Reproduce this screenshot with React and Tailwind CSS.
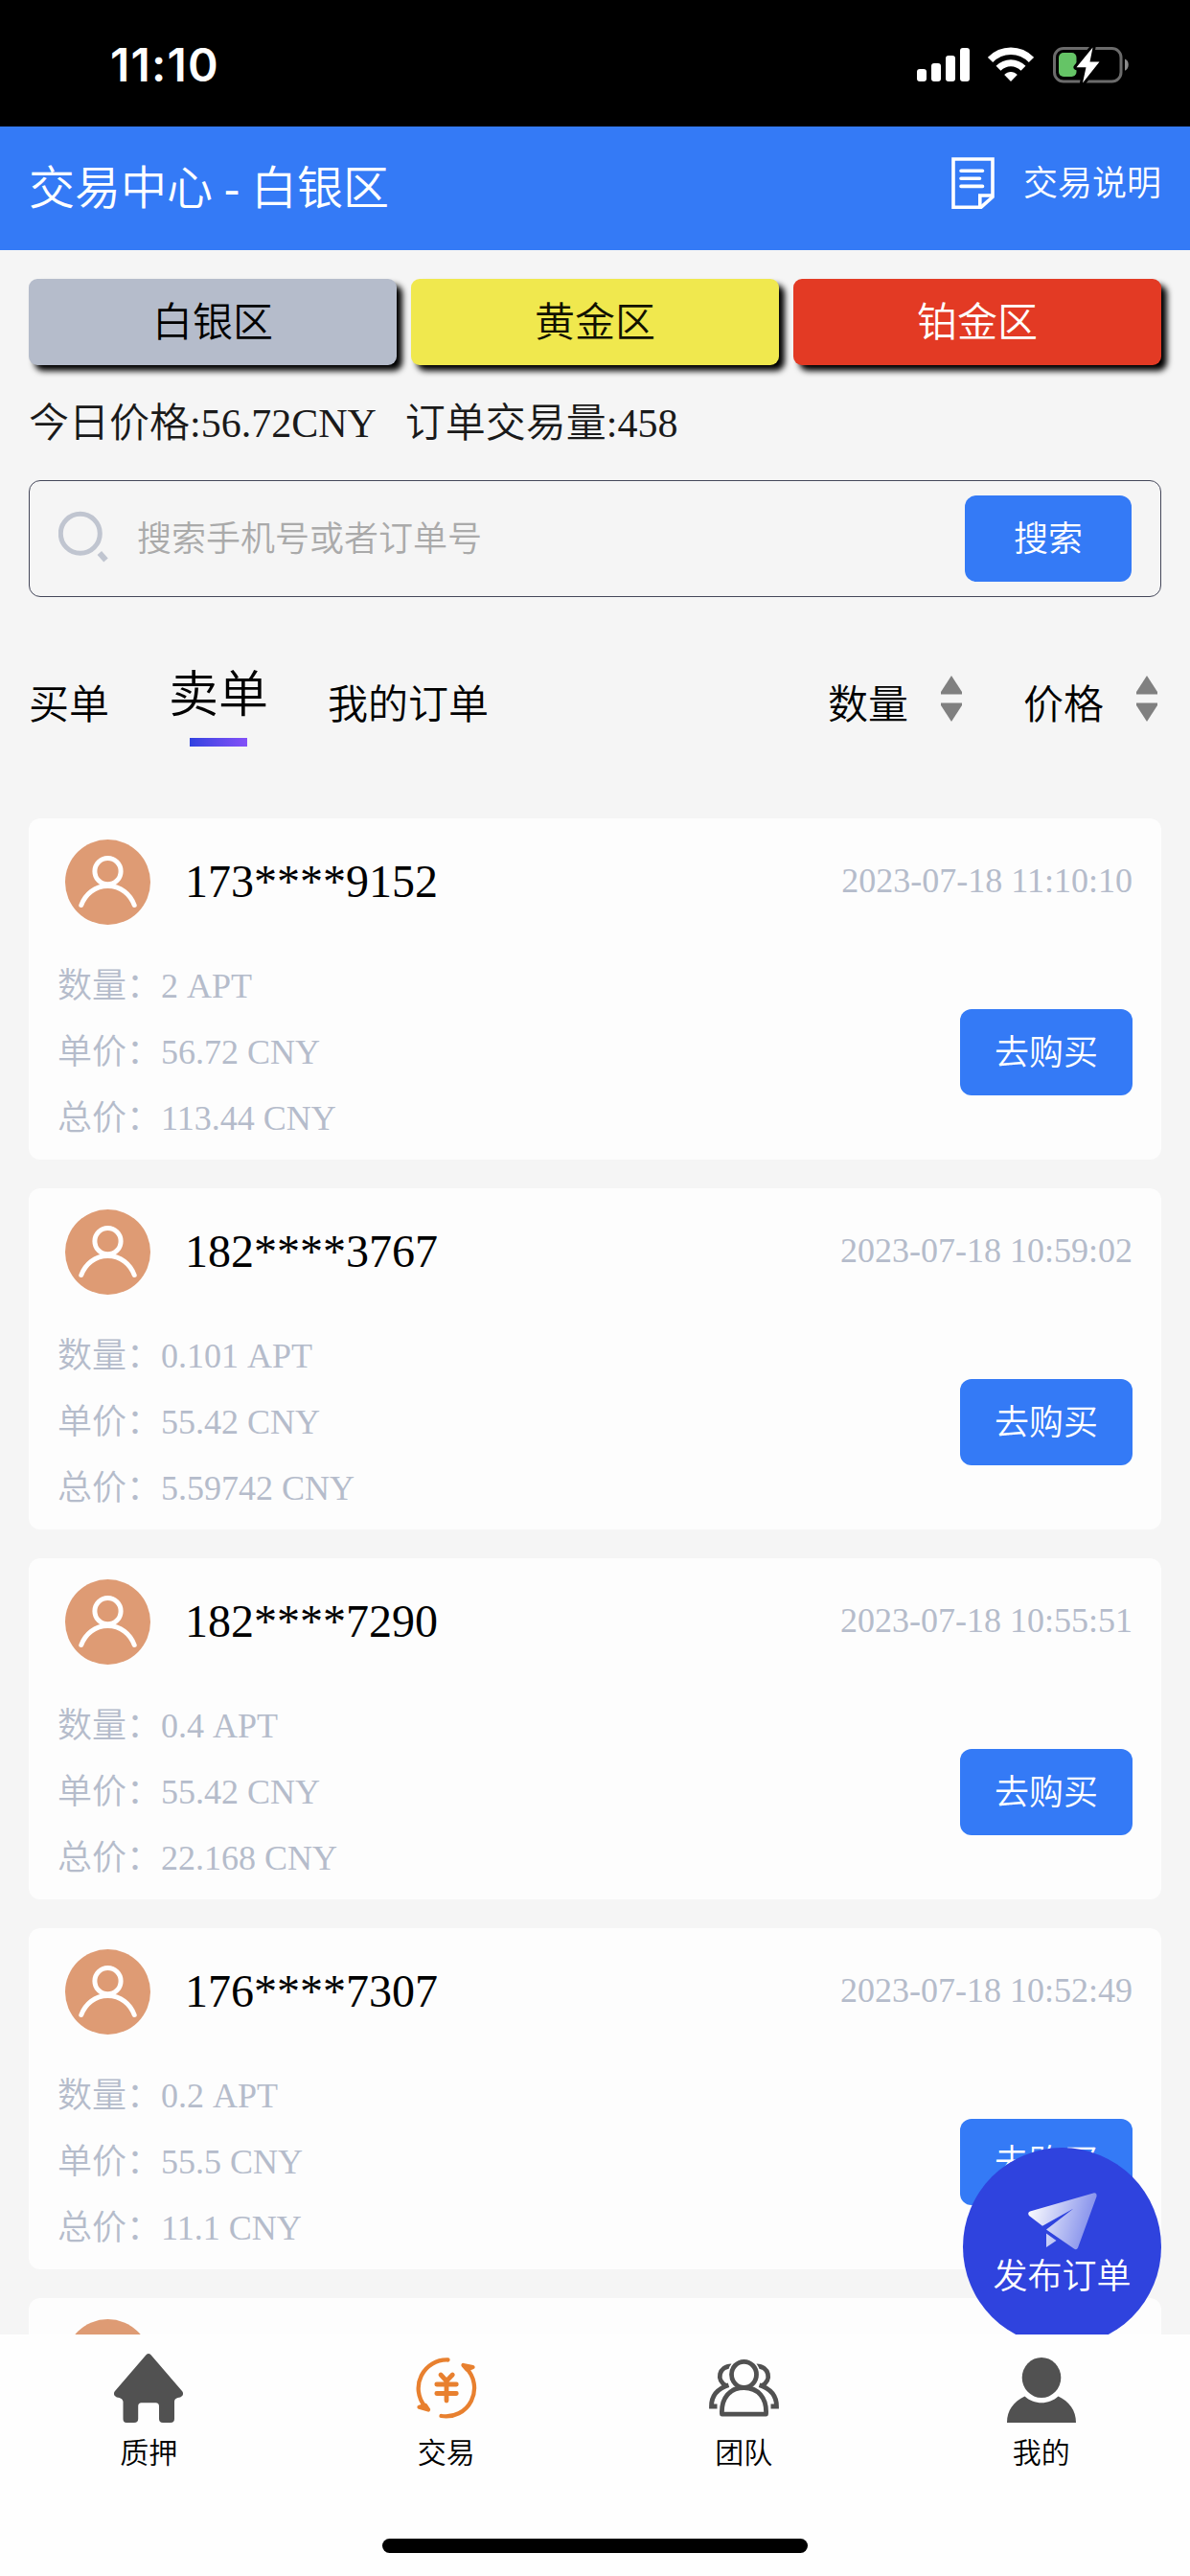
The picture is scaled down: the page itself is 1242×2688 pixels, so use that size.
import { useState } from "react";
import clsx from "clsx";

const zones = [
  { name: "白银区", style: "bg-[#b5bccb] text-black" },
  { name: "黄金区", style: "bg-[#f0e84e] text-[#111100]" },
  { name: "铂金区", style: "bg-[#e33a24] text-white" },
];

const orders = [
  { id: 1, phone: "173****9152", time: "2023-07-18 11:10:10", amount: "2", price: "56.72", total: "113.44" },
  { id: 2, phone: "182****3767", time: "2023-07-18 10:59:02", amount: "0.101", price: "55.42", total: "5.59742" },
  { id: 3, phone: "182****7290", time: "2023-07-18 10:55:51", amount: "0.4", price: "55.42", total: "22.168" },
  { id: 4, phone: "176****7307", time: "2023-07-18 10:52:49", amount: "0.2", price: "55.5", total: "11.1" },
  { id: 5 },
];

const StatusBar = () => (
  <div className="flex h-[132px] shrink-0 items-start justify-between bg-black pl-[115px] pr-[63px] pt-[49px] text-white">
    <span className="font-[Inter,sans-serif] text-[48px] font-semibold leading-[38px] tracking-[1.2px]">
      11:10
    </span>
    <div className="flex items-start">
      <svg width="55" height="38" viewBox="0 0 55 38" fill="#fff">
        <rect x="0" y="23" width="10" height="13" rx="3" />
        <rect x="15" y="17" width="10" height="19" rx="3" />
        <rect x="30" y="9" width="10" height="27" rx="3" />
        <rect x="45" y="1" width="10" height="35" rx="3" />
      </svg>
      <svg className="ml-[19px]" width="48" height="38" viewBox="0 0 48 38" fill="none" stroke="#fff">
        <path d="M2.5 13.5C14.5 1.2 33.5 1.2 45.5 13.5" strokeWidth="7.5" />
        <path d="M11 22.3C18.5 14.8 29.5 14.8 37 22.3" strokeWidth="7" />
        <path d="M17.2 29C21 25 27 25 30.8 29L24 36Z" fill="#fff" stroke="none" />
      </svg>
      <svg className="ml-[20px]" width="80" height="38" viewBox="0 0 80 38">
        <rect x="1.5" y="1.5" width="69.5" height="34.5" rx="9.5" fill="none" stroke="#6b6b6b" strokeWidth="3" />
        <rect x="6" y="6" width="18.5" height="25" rx="5" fill="#65c466" />
        <path d="M75 12.5C80 14 80 23 75 24.8Z" fill="#8a8a8a" />
        <path
          d="M41.5 0.5L24.5 21.2H34.5L31 37.5L48.5 15.5H38.5Z"
          fill="#fff"
          stroke="#000"
          strokeWidth="6"
          strokeLinejoin="round"
          paintOrder="stroke"
        />
      </svg>
    </div>
  </div>
);

const Header = () => (
  <header className="flex h-[129px] shrink-0 justify-between bg-[#347af6] px-[30px] text-white">
    <h1 className="text-[48px] font-[350] leading-[129px]">交易中心 - 白银区</h1>
    <div className="flex h-[118px] items-center">
      <svg width="45" height="54" viewBox="0 0 45 54" fill="none" stroke="#fff" strokeWidth="3.6">
        <path d="M2 2H43V41.5L31 52.2H2Z" />
        <path d="M43 40H29.8V52" />
        <path d="M10 14.2H32.5M10 22.3H29.5M10 30.4H32.5" strokeLinecap="round" />
      </svg>
      <span className="ml-[30px] pt-px text-[36px]">交易说明</span>
    </div>
  </header>
);

const SearchBox = () => {
  const [keyword, setKeyword] = useState("");

  return (
    <div className="flex h-[122px] items-center rounded-xl border border-[#44475a] px-[30px]">
      <svg className="-mt-1" width="53" height="54" viewBox="0 0 53 54" fill="none" stroke="#c0c5d0" strokeWidth="5">
        <circle cx="22.8" cy="23.8" r="20.5" />
        <path d="M42.8 44L49.5 51.5" strokeWidth="6" />
      </svg>
      <input
        value={keyword}
        onChange={(e) => setKeyword(e.target.value)}
        placeholder="搜索手机号或者订单号"
        className="ml-[29px] flex-1 bg-transparent pt-0.5 text-[36px] placeholder-[#aaaaaa] outline-none"
      />
      <button className="h-[90px] w-[174px] rounded-xl bg-[#347af6] pt-0.5 text-[36px] text-white">搜索</button>
    </div>
  );
};

const SortArrows = () => (
  <svg className="-mt-3.5 ml-[34px]" width="22" height="48" viewBox="0 0 22 48" fill="#808080">
    <path d="M11 0L22 17V19.5H0V17Z" />
    <path d="M11 48L22 31V28.5H0V31Z" />
  </svg>
);

const Tabs = () => {
  const [active, setActive] = useState("卖单");

  return (
    <div className="flex h-[231px] items-start justify-between pr-1 pt-[83px] text-[42px] leading-[60px] text-black">
      <div className="flex gap-[62px]">
        {["买单", "卖单", "我的订单"].map((tab) => (
          <button key={tab} onClick={() => setActive(tab)} className="flex flex-col items-center">
            <span className={clsx(active === tab && "-mt-[10px] text-[52px]")}>{tab}</span>
            {active === tab && (
              <span className="mt-3.5 h-[9px] w-[60px] bg-linear-to-r from-[#3042e0] to-[#8350f8]" />
            )}
          </button>
        ))}
      </div>
      <div className="flex gap-16">
        <div className="flex items-center">
          数量
          <SortArrows />
        </div>
        <div className="flex items-center">
          价格
          <SortArrows />
        </div>
      </div>
    </div>
  );
};

const OrderCard = ({ order }) => (
  <div className="h-[356px] shrink-0 rounded-xl bg-[#fdfdfd] px-[30px] pt-[22px]">
    <div className="flex h-[89px] items-center">
      <svg className="ml-2" width="89" height="89" viewBox="0 0 89 89" fill="none" stroke="#fff" strokeWidth="5">
        <circle cx="44.5" cy="44.5" r="44.5" fill="#de9b74" stroke="none" />
        <circle cx="44.5" cy="33.2" r="13.6" />
        <path d="M16.8 68.5C21 57 31 48.5 44.5 48.5S68 57 72.2 68.5" strokeLinecap="round" />
      </svg>
      <span className="ml-[36px] pb-px text-[48px] text-black">{order.phone}</span>
      <span className="ml-auto pb-[3px] text-[36px] text-[#b5bccb]">{order.time}</span>
    </div>
    {order.phone && (
      <div className="mt-[30px] flex items-center justify-between">
        <div className="text-[36px] leading-[69px] text-[#b5bccb]">
          <p>数量：{order.amount} APT</p>
          <p>单价：{order.price} CNY</p>
          <p>总价：{order.total} CNY</p>
        </div>
        <button className="-mt-px h-[90px] w-[180px] rounded-xl bg-[#347af6] pt-0.5 text-[36px] text-white">
          去购买
        </button>
      </div>
    )}
  </div>
);

const HomeIcon = () => (
  <svg width="72" height="72" viewBox="0 0 72 72" fill="#515151">
    <path d="M33.5 1.2Q36 -1.2 38.5 1.2L71 39Q73 41.5 71.2 44Q69.5 46 66.5 46Q63 47 63 50V68Q63 72 59 72H51Q47 72 47 68V55Q47 51.3 43.5 51.3H28.5Q25.2 51.3 25.2 55V68Q25.2 72 21 72H13Q9.5 72 9.5 68V50Q9 47 5.5 46Q2.5 46 0.8 44Q-1 41.5 1 39Z" />
  </svg>
);

const TradeIcon = () => (
  <svg
    width="64"
    height="72"
    viewBox="0 -4 64 72"
    fill="none"
    stroke="#e8802f"
    strokeWidth="4.3"
    strokeLinecap="round"
    strokeLinejoin="round"
  >
    <path d="M33.5 2.5A29.6 29.6 0 0 0 9.5 51" />
    <path d="M3.5 51.8L13 54.5L10 50Z" />
    <path d="M26.5 61A29.6 29.6 0 0 0 52 10.5" />
    <path d="M59.5 10L49.5 8L53.5 12.5Z" />
    <path d="M26 18L32 24.5L38.3 18M32 24.5V45M21.8 28H42.3M21.8 37.5H42.3" strokeWidth="4.8" />
  </svg>
);

const TeamIcon = () => (
  <svg width="73" height="72" viewBox="0 -6 73 72" fill="none" stroke="#515151" strokeWidth="4.8">
    <path d="M23.5 7C10 7 7 22 18 27.5" />
    <path d="M20.5 26.8C9 30.5 2.5 38 2.5 49H8.5" />
    <path d="M49.5 7C63 7 66 22 55 27.5" />
    <path d="M52.5 26.8C64 30.5 70.5 38 70.5 49H64.5" />
    <ellipse cx="36.5" cy="15.8" rx="13" ry="13.5" fill="#fff" stroke="#fff" strokeWidth="8" />
    <ellipse cx="36.5" cy="15.8" rx="13" ry="13.5" />
    <path d="M13.5 57.2C12.5 40 22 29.5 36.5 29.5S60.5 40 59.5 57.2Z" strokeLinejoin="round" />
  </svg>
);

const MineIcon = () => (
  <svg width="72" height="72" viewBox="0 -4 72 72" fill="#515151">
    <ellipse cx="36" cy="21" rx="20.3" ry="21" />
    <path d="M0 68C0 55 7 46 18.5 40.5C28 49.5 44 49.5 53.5 40.5C65 46 72 55 72 68Z" />
  </svg>
);

const navItems = [
  { label: "质押", Icon: HomeIcon },
  { label: "交易", Icon: TradeIcon },
  { label: "团队", Icon: TeamIcon },
  { label: "我的", Icon: MineIcon },
];

const PublishButton = () => (
  <button className="absolute right-[30px] top-[2241px] flex h-[207px] w-[207px] flex-col items-center rounded-full bg-[#2f43de] pt-[47px] text-white">
    <svg width="72" height="60" viewBox="0 0 72 60" fill="url(#plane)">
      <defs>
        <linearGradient id="plane" gradientUnits="userSpaceOnUse" x1="0" y1="20" x2="66" y2="38">
          <stop offset="0" stopColor="#fff" stopOpacity="0.98" />
          <stop offset="1" stopColor="#fff" stopOpacity="0.4" />
        </linearGradient>
      </defs>
      <path d="M69 0.2Q72 0 71.5 4L52 57.5Q50.5 60.5 48 58.5L19 38.5L47.5 16.5L15 34.8L1 24Q-1 21 2 19.5Z" />
      <path d="M19 42.5L29.5 50L19 57Z" />
    </svg>
    <span className="mt-[10px] text-[36px] leading-[36px]">发布订单</span>
  </button>
);

const App = () => {
  return (
    <div className="relative flex h-[2688px] w-[1242px] flex-col overflow-hidden bg-[#f5f5f5] font-['Liberation_Serif','Noto_Sans_CJK_SC',serif] font-[350]">
      <StatusBar />
      <Header />

      <main className="flex min-h-0 flex-1 flex-col overflow-hidden px-[30px] pt-[30px]">
        <div className="flex shrink-0 gap-[15px]">
          {zones.map((zone) => (
            <button
              key={zone.name}
              className={clsx("h-[90px] flex-1 rounded-[9px] pt-0.5 text-[42px] shadow-[6px_6px_6px_#000]", zone.style)}
            >
              {zone.name}
            </button>
          ))}
        </div>
        <div className="flex h-[120px] shrink-0 gap-[30px] text-[42px] leading-[122px] text-[#1a1a1a]">
          <span>今日价格:56.72CNY</span>
          <span>订单交易量:458</span>
        </div>
        <div className="shrink-0">
          <SearchBox />
          <Tabs />
        </div>
        <div className="flex flex-col gap-[30px]">
          {orders.map((order) => (
            <OrderCard key={order.id} order={order} />
          ))}
        </div>
      </main>

      <PublishButton />

      <nav className="relative z-10 flex h-[252px] shrink-0 flex-col items-center justify-between bg-[#fefefe] pb-6 pt-5">
        <div className="flex w-full">
          {navItems.map(({ label, Icon }) => (
            <button key={label} className="flex flex-1 flex-col items-center text-[30px] leading-[40px] text-black">
              <Icon />
              <span className="mt-3">{label}</span>
            </button>
          ))}
        </div>
        <div className="h-[15px] w-[444px] rounded-full bg-black" />
      </nav>
    </div>
  );
};

export default App;
